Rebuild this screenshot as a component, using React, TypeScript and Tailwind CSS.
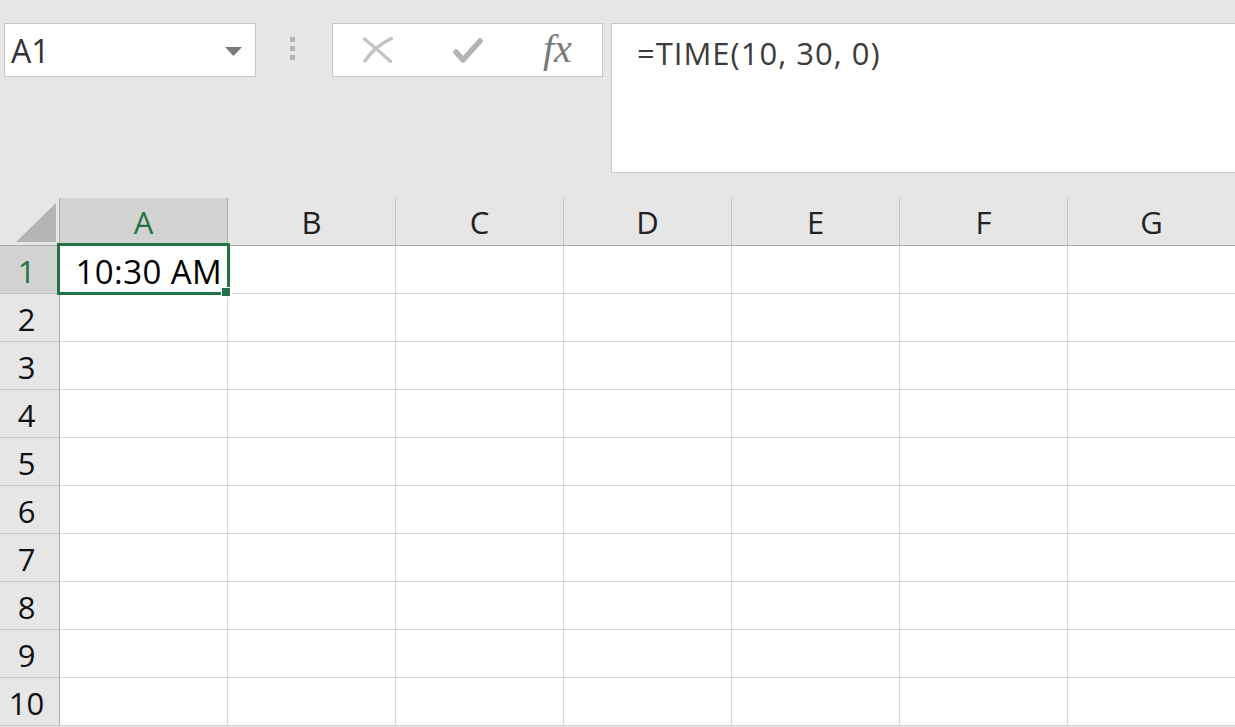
import React from "react";

const COLS = ["A", "B", "C", "D", "E", "F", "G"];
const ROWS = [1, 2, 3, 4, 5, 6, 7, 8, 9, 10];

export default function App() {
  return (
    <div
      className="w-[1235px] h-[727px] bg-[#e6e6e6] overflow-hidden flex flex-col"
      style={{ fontFamily: '"Open Sans", "Noto Sans", sans-serif' }}
    >
      {/* Top bar */}
      <div className="h-[198px] shrink-0 flex items-start pt-[23px] pl-[4px]">
        {/* Name box */}
        <div className="w-[252px] h-[54px] shrink-0 bg-white border border-[#c6c6c6] flex items-center justify-between pl-[6px] pr-[13px]">
          <span className="text-[32px] leading-none text-[#333333] pt-[2px]">A1</span>
          <svg width="17" height="9" viewBox="0 0 17 9" className="mt-[2px]">
            <polygon points="0,0 17,0 8.5,9" fill="#7a7a7a" />
          </svg>
        </div>
        {/* Dots */}
        <div className="ml-[34px] mt-[14px] flex flex-col gap-[4px] shrink-0">
          <div className="w-[5px] h-[5px] bg-[#b4b4b4]" />
          <div className="w-[5px] h-[5px] bg-[#b4b4b4]" />
          <div className="w-[5px] h-[5px] bg-[#b4b4b4]" />
        </div>
        {/* Buttons box */}
        <div className="ml-[37px] w-[271px] h-[54px] shrink-0 bg-white border border-[#c6c6c6] flex items-center pl-[30px]">
          <svg width="30" height="26" viewBox="0 0 30 26" className="shrink-0">
            <path d="M1.5 2 Q 14 12 27.5 24.5" stroke="#c4c4c4" strokeWidth="3.5" fill="none" strokeLinecap="round" />
            <path d="M2 24 Q 12 9 28.5 1.5" stroke="#c4c4c4" strokeWidth="3.5" fill="none" strokeLinecap="round" />
          </svg>
          <svg width="30" height="26" viewBox="0 0 30 26" className="ml-[60px] shrink-0">
            <path d="M3 15 L 10 23 L 27 4" stroke="#b4b4b4" strokeWidth="5.5" fill="none" strokeLinecap="round" strokeLinejoin="round" />
          </svg>
          <span
            className="ml-[60px] text-[40px] leading-none italic text-[#7a7a7a] shrink-0 pb-[2px]"
            style={{ fontFamily: '"Liberation Serif", "DejaVu Serif", serif' }}
          >
            fx
          </span>
        </div>
        {/* Formula box */}
        <div className="ml-[8px] flex-1 h-[150px] bg-white border border-r-0 border-[#c6c6c6] pl-[25px] pt-[14px]">
          <span className="text-[31px] leading-none text-[#3c3c3c] tracking-[1px]">=TIME(10, 30, 0)</span>
        </div>
      </div>

      {/* Column headers */}
      <div className="h-[48px] shrink-0 flex border-b border-[#ababab]">
        <div className="w-[60px] shrink-0 border-r border-[#ababab] relative">
          <svg width="60" height="47" viewBox="0 0 60 47" className="absolute left-0 top-0">
            <polygon points="56,5 56,44 16,44" fill="#b4b4b4" />
          </svg>
        </div>
        {COLS.map((c, i) => (
          <div
            key={c}
            className={
              i === 0
                ? "w-[168px] shrink-0 flex items-center justify-center bg-[#d2d2d2] border-r border-[#ababab] text-[31px] text-[#217346]"
                : "w-[168px] shrink-0 flex items-center justify-center border-r border-[#c6c6c6] text-[31px] text-[#222222]"
            }
          >
            <span className="pt-[2px]">{c}</span>
          </div>
        ))}
      </div>

      {/* Rows */}
      {ROWS.map((r) => (
        <div key={r} className="h-[48px] shrink-0 flex">
          <div
            className={
              r === 1
                ? "w-[60px] shrink-0 flex items-center justify-center pr-[6px] pt-[3px] bg-[#d2d2d2] border-r border-b border-r-[#ababab] border-b-[#c6c6c6] text-[31px] text-[#217346]"
                : "w-[60px] shrink-0 flex items-center justify-center pr-[6px] pt-[3px] bg-[#e6e6e6] border-r border-b border-r-[#ababab] border-b-[#c6c6c6] text-[31px] text-[#111111]"
            }
          >
            {r}
          </div>
          {COLS.map((c, i) => (
            <div
              key={c}
              className="w-[168px] shrink-0 bg-white border-r border-b border-[#d4d4d4] relative flex items-center justify-end"
            >
              {r === 1 && i === 0 && (
                <>
                  <span className="text-[33px] text-black pr-[5px] pt-[4px] leading-none tracking-[0.4px]">10:30 AM</span>
                  <div className="absolute left-[-3px] top-[-3px] w-[173px] h-[52px] border-[3px] border-[#217346] z-10 pointer-events-none" />
                  <div className="absolute left-[161px] top-[41px] w-[10px] h-[10px] bg-[#217346] border border-white z-20" />
                </>
              )}
            </div>
          ))}
        </div>
      ))}
    </div>
  );
}
